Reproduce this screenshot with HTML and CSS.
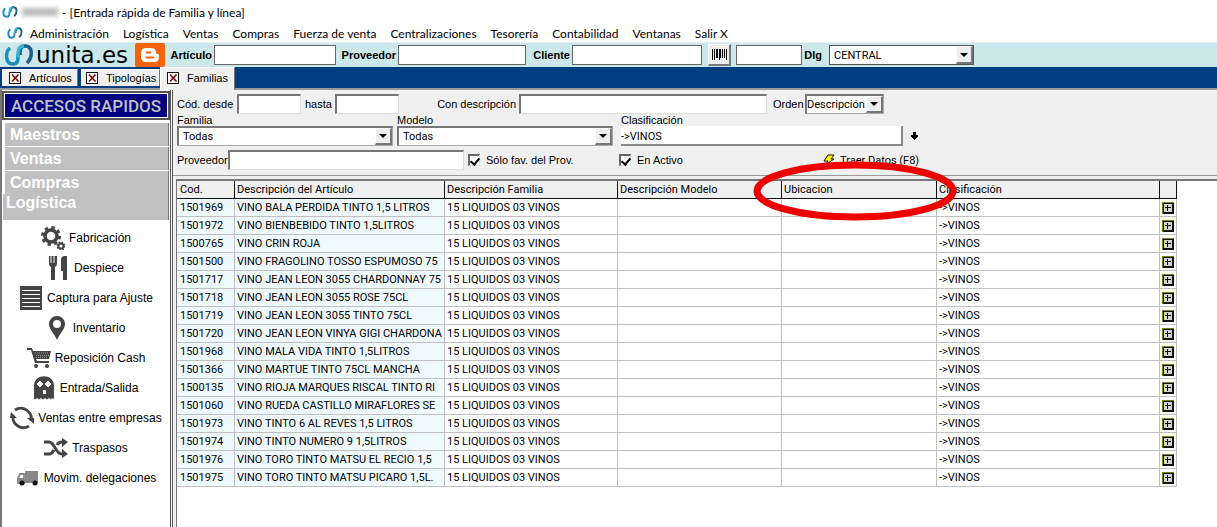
FILE: index.html
```html
<!DOCTYPE html>
<html lang="es">
<head>
  <meta charset="UTF-8">
  <meta name="viewport" content="width=device-width, initial-scale=1">
  <title>Entrada rápida de Familia y línea</title>
  <link rel="stylesheet" href="styles.css">
</head>
<body>
  <!-- Shared icons -->
  <svg class="defs" width="0" height="0" aria-hidden="true">
    <symbol id="logo" viewBox="0 0 30 24">
      <path d="M6 5C1 9 1 21 9 21c6 0 5-7 5-10" fill="none" stroke="#1b8fb8" stroke-width="3.500"/>
      <path d="M16 12c0-4 0-9 5-9 8 0 8 11 2 17" fill="none" stroke="#1f5f85" stroke-width="3.500"/>
      <path d="M14 14c0-5 0-11 6-11" fill="none" stroke="#35b4d6" stroke-width="3.500"/>
    </symbol>
    <symbol id="close" viewBox="0 0 12 12">
      <path d="M0 0h12v12H0z" fill="#111"/><path d="M1 1h10v10H1z" fill="#fff"/>
      <path d="M3 2.500l6.500 7M9.500 2.500l-6.500 7" stroke="#800000" stroke-width="1.600"/>
    </symbol>
    <symbol id="down" viewBox="0 0 8 4"><path d="M0 0h8L4 4z"/></symbol>
    <symbol id="plus" viewBox="0 0 12 12" shape-rendering="crispEdges">
      <path d="M0 0h12v12H0z" fill="#111"/><path d="M0 0h12v1H1v11H0z" fill="#808000"/>
      <path d="M2 2h8v8H2z" fill="#d4d4d4"/><path d="M3 5h6v1H3zM5 3h1v6H5z" fill="#000"/>
    </symbol>
  </svg>

  <header>
    <div class="titlebar">
      <svg class="mini-logo"><use href="#logo"/></svg>
      <span class="smudge"></span>
      <span>- [Entrada rápida de Familia y línea]</span>
    </div>
    <nav class="menu">
      <svg class="mini-logo"><use href="#logo"/></svg>
      <a href="#">Administración</a>
      <a href="#">Logística</a>
      <a href="#">Ventas</a>
      <a href="#">Compras</a>
      <a href="#">Fuerza de venta</a>
      <a href="#">Centralizaciones</a>
      <a href="#">Tesorería</a>
      <a href="#">Contabilidad</a>
      <a href="#">Ventanas</a>
      <a href="#">Salir X</a>
    </nav>
    <div class="toolbar">
      <a class="brand" href="#"><svg><use href="#logo"/></svg><span>unita.es</span></a>
      <button class="blog" aria-label="Blog">
        <svg viewBox="0 0 30 24">
          <rect width="30" height="24" rx="2" fill="#f4640c"/>
          <path d="M11 5h5q5 0 5 4.500q0 1.500 1.500 1.500q1.500 0 1.500 2v1q0 5-5 5h-8q-5 0-5-5v-4q0-5 5-5z" fill="#fff"/>
          <path d="M11.500 9.500h4M11.500 14.500h7" stroke="#f4640c" stroke-width="2" stroke-linecap="round"/>
        </svg>
      </button>
      <label for="articulo">Artículo</label>
      <input type="text" id="articulo">
      <label for="proveedorTop">Proveedor</label>
      <input type="text" id="proveedorTop">
      <label for="cliente">Cliente</label>
      <input type="text" id="cliente">
      <button class="barcode" aria-label="Código de barras">
        <svg viewBox="0 0 16 11" shape-rendering="crispEdges"><path d="M0 0h1v11H0zM2 0h1v11H2zM4 0h2v9H4zM7 0h1v11H7zM9 0h1v9H9zM11 0h1v9h-1zM13 0h1v9h-1zM15 0h1v11h-1z"/></svg>
      </button>
      <input type="text" aria-label="Código">
      <label for="dlg">Dlg</label>
      <div class="combo flat">
        <select id="dlg"><option>CENTRAL</option></select>
        <span class="arrow"><svg><use href="#down"/></svg></span>
      </div>
    </div>
    <div class="tabs">
      <button class="tab"><svg><use href="#close"/></svg>Artículos</button>
      <button class="tab"><svg><use href="#close"/></svg>Tipologías</button>
      <button class="tab active"><svg><use href="#close"/></svg>Familias</button>
    </div>
  </header>

  <div class="workspace">
    <aside class="sidebar">
      <h2>ACCESOS RAPIDOS</h2>
      <button class="group">Maestros</button>
      <button class="group">Ventas</button>
      <button class="group">Compras</button>
      <button class="group open">Logística</button>
      <nav class="shortcuts">
        <a href="#">
          <svg viewBox="0 0 24 24">
            <circle cx="10" cy="10" r="6" fill="none" stroke="#444" stroke-width="3.500"/>
            <circle cx="10" cy="10" r="8.500" fill="none" stroke="#444" stroke-width="3" stroke-dasharray="3.340 3.340"/>
            <circle cx="20" cy="20" r="2.500" fill="none" stroke="#444" stroke-width="2"/>
            <circle cx="20" cy="20" r="3.800" fill="none" stroke="#444" stroke-width="1.500" stroke-dasharray="1.500 1.500"/>
          </svg>Fabricación</a>
        <a href="#">
          <svg class="narrow" viewBox="0 0 20 24"><path d="M1 0h1.500v7h1V0h2v7h1V0H9v8q0 2-2 3v13H3V11q-2-1-2-3zM19 0v24h-4v-9h-2V4q0-4 4-4z" fill="#444"/></svg>Despiece</a>
        <a href="#">
          <svg viewBox="0 0 24 24"><path d="M1 0h22v24H1z" fill="#444"/><path d="M3 4.500h18M3 8.500h18M3 12.500h18M3 16.500h18M3 20.500h18" stroke="#fff"/></svg>Captura para Ajuste</a>
        <a href="#">
          <svg class="narrow" viewBox="0 0 20 24"><path d="M10 0a8 8 0 0 1 8 8c0 5-5 9-8 16c-3-7-8-11-8-16a8 8 0 0 1 8-8zM10 4a4 4 0 1 0 0 8a4 4 0 1 0 0-8z" fill="#444"/></svg>Inventario</a>
        <a href="#">
          <svg viewBox="0 0 24 24">
            <path d="M0 2h5l1 3h18l-2 8H9l1 2h12v2H8L4 4H0z" fill="#444"/>
            <path d="M8 7h14M9 9.500h13M9 11.500h12" stroke="#999" stroke-dasharray="1 1"/>
            <circle cx="9" cy="20" r="2" fill="#444"/><circle cx="20" cy="20" r="2" fill="#444"/>
          </svg>Reposición Cash</a>
        <a href="#">
          <svg class="narrow" viewBox="0 0 20 24">
            <path d="M0 23V10C0-3 20-3 20 10v13l-2-1-1 1.500-2-1.500-2 1.500-2-1.500-2 1.500-2-1.500-2 1.500-2-1.500-2 1.500z" fill="#444"/>
            <path d="M4 6h4v4H4zM12 6h4v4h-4zM9 14h3v4H9z" fill="#fff"/><path d="M6 5v6M14 5v6M3 8h6M11 8h6" stroke="#fff" stroke-width="2"/>
          </svg>Entrada/Salida</a>
        <a href="#">
          <svg viewBox="0 0 24 24"><path d="M5 4a10.500 10.500 0 0 1 16 11M19 20a10.500 10.500 0 0 1-16-10" fill="none" stroke="#444" stroke-width="2.800"/><path d="M17 12h7v6zM0 12h7L1 6z" fill="#444"/></svg>Ventas entre empresas</a>
        <a href="#">
          <svg viewBox="0 0 24 24"><path d="M0 6h5c6 0 6 12 13 12h2M0 18h5c2 0 4-2 5-4M13 9c1-2 3-3 5-3h2" fill="none" stroke="#444" stroke-width="3"/><path d="M18 2l6 4-6 5zM18 13l6 5-6 4z" fill="#444"/></svg>Traspasos</a>
        <a href="#">
          <svg viewBox="0 0 24 24"><path d="M9 5h13v12H9z" fill="#888"/><path d="M8 7v10H2v-5l2-4h4M8 16h14" fill="none" stroke="#888" stroke-width="1.800"/><path d="M2 12h6v5H2z" fill="#888"/><circle cx="6" cy="17" r="2.500" fill="#111"/><circle cx="19" cy="17" r="2.500" fill="#111"/></svg>Movim. delegaciones</a>
      </nav>
    </aside>

    <main>
      <form class="filters">
        <div class="row search">
          <label for="desde">Cód. desde</label>
          <input type="text" id="desde">
          <label for="hasta">hasta</label>
          <input type="text" id="hasta">
          <label class="desc-label" for="descripcion">Con descripción</label>
          <input type="text" id="descripcion">
          <label for="orden">Orden</label>
          <div class="combo">
            <select id="orden"><option>Descripción</option></select>
            <span class="arrow"><svg><use href="#down"/></svg></span>
          </div>
        </div>
        <div class="row selectors">
          <div class="field">
            <label for="familia">Familia</label>
            <div class="combo wide">
              <select id="familia"><option>Todas</option></select>
              <span class="arrow"><svg><use href="#down"/></svg></span>
            </div>
          </div>
          <div class="field">
            <label for="modelo">Modelo</label>
            <div class="combo wide">
              <select id="modelo"><option>Todas</option></select>
              <span class="arrow"><svg><use href="#down"/></svg></span>
            </div>
          </div>
          <div class="field clasif">
            <label for="clasificacion">Clasificación</label>
            <input type="text" id="clasificacion" value="-&gt;VINOS">
          </div>
          <button type="button" class="pick" aria-label="Elegir clasificación"><svg viewBox="0 0 7 8" shape-rendering="crispEdges"><path d="M2 0h3v3h2v2H6v1H5v1H4v1H3V7H2V6H1V5H0V3h2z"/></svg></button>
        </div>
        <div class="row options">
          <label for="proveedor">Proveedor</label>
          <input type="text" id="proveedor">
          <label class="check"><input type="checkbox" checked>Sólo fav. del Prov.</label>
          <label class="check"><input type="checkbox" checked>En Activo</label>
          <button type="button" class="fetch"><svg viewBox="0 0 12 12"><path d="M5 1h6L8 5h3L2 11l3-4H1z" fill="#ff0" stroke="#111"/></svg>Traer Datos (F8)</button>
        </div>
      </form>

      <div class="grid">
        <table>
          <colgroup>
            <col class="c-cod"><col class="c-art"><col class="c-fam"><col class="c-mod"><col class="c-ubi"><col class="c-cla"><col class="c-plus">
          </colgroup>
          <thead>
            <tr>
              <th>Cod.</th>
              <th>Descripción del Artículo</th>
              <th>Descripción Familia</th>
              <th>Descripción Modelo</th>
              <th class="marked">Ubicacion
                <svg class="mark" viewBox="0 0 204 60"><ellipse cx="102" cy="30" rx="98" ry="26" fill="none" stroke="#ee0000" stroke-width="7"/></svg>
              </th>
              <th>Clasificación</th>
              <th></th>
            </tr>
          </thead>
          <tbody>
            <tr><td>1501969</td><td>VINO BALA PERDIDA TINTO 1,5 LITROS</td><td>15 LIQUIDOS 03 VINOS</td><td></td><td></td><td>-&gt;VINOS</td><td><button aria-label="Ver 1501969"><svg><use href="#plus"/></svg></button></td></tr>
            <tr><td>1501972</td><td>VINO BIENBEBIDO TINTO 1,5LITROS</td><td>15 LIQUIDOS 03 VINOS</td><td></td><td></td><td>-&gt;VINOS</td><td><button aria-label="Ver 1501972"><svg><use href="#plus"/></svg></button></td></tr>
            <tr><td>1500765</td><td>VINO CRIN ROJA</td><td>15 LIQUIDOS 03 VINOS</td><td></td><td></td><td>-&gt;VINOS</td><td><button aria-label="Ver 1500765"><svg><use href="#plus"/></svg></button></td></tr>
            <tr><td>1501500</td><td>VINO FRAGOLINO TOSSO ESPUMOSO 75</td><td>15 LIQUIDOS 03 VINOS</td><td></td><td></td><td>-&gt;VINOS</td><td><button aria-label="Ver 1501500"><svg><use href="#plus"/></svg></button></td></tr>
            <tr><td>1501717</td><td>VINO JEAN LEON 3055 CHARDONNAY 75</td><td>15 LIQUIDOS 03 VINOS</td><td></td><td></td><td>-&gt;VINOS</td><td><button aria-label="Ver 1501717"><svg><use href="#plus"/></svg></button></td></tr>
            <tr><td>1501718</td><td>VINO JEAN LEON 3055 ROSE 75CL</td><td>15 LIQUIDOS 03 VINOS</td><td></td><td></td><td>-&gt;VINOS</td><td><button aria-label="Ver 1501718"><svg><use href="#plus"/></svg></button></td></tr>
            <tr><td>1501719</td><td>VINO JEAN LEON 3055 TINTO 75CL</td><td>15 LIQUIDOS 03 VINOS</td><td></td><td></td><td>-&gt;VINOS</td><td><button aria-label="Ver 1501719"><svg><use href="#plus"/></svg></button></td></tr>
            <tr><td>1501720</td><td>VINO JEAN LEON VINYA GIGI CHARDONA</td><td>15 LIQUIDOS 03 VINOS</td><td></td><td></td><td>-&gt;VINOS</td><td><button aria-label="Ver 1501720"><svg><use href="#plus"/></svg></button></td></tr>
            <tr><td>1501968</td><td>VINO MALA VIDA TINTO 1,5LITROS</td><td>15 LIQUIDOS 03 VINOS</td><td></td><td></td><td>-&gt;VINOS</td><td><button aria-label="Ver 1501968"><svg><use href="#plus"/></svg></button></td></tr>
            <tr><td>1501366</td><td>VINO MARTUE TINTO 75CL MANCHA</td><td>15 LIQUIDOS 03 VINOS</td><td></td><td></td><td>-&gt;VINOS</td><td><button aria-label="Ver 1501366"><svg><use href="#plus"/></svg></button></td></tr>
            <tr><td>1500135</td><td>VINO RIOJA MARQUES RISCAL TINTO RI</td><td>15 LIQUIDOS 03 VINOS</td><td></td><td></td><td>-&gt;VINOS</td><td><button aria-label="Ver 1500135"><svg><use href="#plus"/></svg></button></td></tr>
            <tr><td>1501060</td><td>VINO RUEDA CASTILLO MIRAFLORES SE</td><td>15 LIQUIDOS 03 VINOS</td><td></td><td></td><td>-&gt;VINOS</td><td><button aria-label="Ver 1501060"><svg><use href="#plus"/></svg></button></td></tr>
            <tr><td>1501973</td><td>VINO TINTO 6 AL REVES 1,5 LITROS</td><td>15 LIQUIDOS 03 VINOS</td><td></td><td></td><td>-&gt;VINOS</td><td><button aria-label="Ver 1501973"><svg><use href="#plus"/></svg></button></td></tr>
            <tr><td>1501974</td><td>VINO TINTO NUMERO 9 1,5LITROS</td><td>15 LIQUIDOS 03 VINOS</td><td></td><td></td><td>-&gt;VINOS</td><td><button aria-label="Ver 1501974"><svg><use href="#plus"/></svg></button></td></tr>
            <tr><td>1501976</td><td>VINO TORO TINTO MATSU EL RECIO 1,5</td><td>15 LIQUIDOS 03 VINOS</td><td></td><td></td><td>-&gt;VINOS</td><td><button aria-label="Ver 1501976"><svg><use href="#plus"/></svg></button></td></tr>
            <tr><td>1501975</td><td>VINO TORO TINTO MATSU PICARO 1,5L.</td><td>15 LIQUIDOS 03 VINOS</td><td></td><td></td><td>-&gt;VINOS</td><td><button aria-label="Ver 1501975"><svg><use href="#plus"/></svg></button></td></tr>
          </tbody>
        </table>
      </div>
    </main>
  </div>
</body>
</html>
```
FILE: styles.css
```css
* {
  box-sizing: border-box;
}
body {
  margin: 0;
  min-height: 100vh;
  display: flex;
  flex-direction: column;
  font-family: "Liberation Sans", Arial, sans-serif;
  font-size: 11px;
  color: #000;
  background: #fff;
}
a {
  color: inherit;
  text-decoration: none;
}
button, input, select {
  font: inherit;
  color: inherit;
  margin: 0;
  padding: 0;
  border: 0;
  border-radius: 0;
  background: none;
  min-width: 0;
}
svg {
  display: block;
  flex: none;
}
.defs {
  position: absolute;
}

/* Title and menu */
.titlebar, .menu {
  display: flex;
  align-items: center;
  font-family: Lato, "Segoe UI", sans-serif;
  font-size: 12px;
  white-space: nowrap;
}
.titlebar {
  height: 24px;
  padding-left: 2px;
  gap: 4px;
}
.mini-logo {
  width: 16px;
  height: 14px;
}
.smudge {
  width: 36px;
  height: 8px;
  background: #bbb;
  filter: blur(2px);
}
.menu {
  height: 18px;
  padding-left: 7px;
  gap: 14px;
}
.menu .mini-logo {
  margin-right: -7px;
}

/* Toolbar */
.toolbar {
  display: grid;
  grid-template-columns: 131px 35px 44px 122px 62px 128px 46px 130px 34px 66px 27px 145px;
  align-items: center;
  height: 25px;
  padding-left: 4px;
  background: #cde8ea;
  border-top: 1px solid #e6eeee;
}
.toolbar label {
  font-weight: bold;
  text-align: right;
  padding-right: 2px;
}
.toolbar label[for="dlg"] {
  padding-right: 7px;
}
.toolbar > input {
  height: 20px;
  background: #fff;
  border: 1px solid #666;
}
.brand {
  display: flex;
  align-items: center;
  gap: 2px;
  font-family: "DejaVu Sans", sans-serif;
  font-size: 23px;
  line-height: 24px;
}
.brand svg {
  width: 30px;
  height: 24px;
}
.blog svg {
  width: 30px;
  height: 24px;
}
.barcode {
  justify-self: center;
  width: 23px;
  height: 22px;
  padding: 3px;
  background: #eee;
  border: 1px solid #fff;
  border-right: 2px solid #777;
  border-bottom: 2px solid #777;
}
.barcode svg {
  width: 15px;
  height: 11px;
}

/* Drop-downs */
.combo {
  display: grid;
  grid-template-columns: 1fr 17px;
  height: 20px;
  background: #fff;
  border: 1px solid #aaa;
  border-top: 2px solid #777;
  border-left: 2px solid #777;
}
.combo.flat {
  border: 1px solid #555;
}
.combo select {
  appearance: none;
  grid-column: 1 / 3;
  grid-row: 1;
  font-family: Roboto, "Liberation Sans", sans-serif;
}
.combo .arrow {
  grid-column: 2;
  grid-row: 1;
  display: grid;
  place-items: center;
  background: #eee;
  border: 1px solid #fff;
  border-right: 2px solid #777;
  border-bottom: 2px solid #777;
  pointer-events: none;
}
.combo .arrow svg {
  width: 8px;
  height: 4px;
}
.combo.wide select, .combo.flat select {
  padding-left: 4px;
}

/* Tabs */
.tabs {
  display: flex;
  align-items: flex-start;
  height: 23px;
  padding: 2px 0 0 2px;
  gap: 3px;
  background: #003e80;
  border-bottom: 2px solid #999;
}
.tab {
  display: flex;
  align-items: center;
  gap: 8px;
  width: 76px;
  height: 17px;
  padding-left: 6px;
  background: #f0f0f0;
  border-top: 1px solid #fff;
  border-left: 1px solid #fff;
  border-right: 1px solid #777;
  white-space: nowrap;
}
.tab:nth-child(2) {
  width: 79px;
  padding-left: 4px;
}
.tab svg {
  width: 12px;
  height: 12px;
}
.tab.active {
  width: 75px;
  height: 23px;
  margin-top: -2px;
  margin-left: -3px;
  padding-bottom: 2px;
}

/* Sidebar */
.workspace {
  flex: 1;
  display: flex;
}
.sidebar {
  width: 173px;
  flex: none;
  padding: 2px 1px 0 1px;
  border-left: 2px solid #777;
  border-right: 3px double #555;
  background: #fff;
}
.sidebar h2 {
  margin: 0 0 4px;
  height: 27px;
  border: 1px solid #555;
  outline: 1px solid #555;
  box-shadow: inset 0 0 0 1px #fff;
  background: #000080;
  color: #c0c0c0;
  font-family: Roboto, "Liberation Sans", sans-serif;
  font-size: 17px;
  font-weight: 500;
  line-height: 26px;
  text-align: center;
  white-space: nowrap;
}
.group {
  display: block;
  width: calc(100% - 2px);
  height: 23px;
  margin: 0 0 1px 2px;
  padding-left: 5px;
  background: #c0c0c0;
  border-right: 1px solid #777;
  color: #fff;
  font-size: 16px;
  font-weight: bold;
  text-align: left;
}
.group.open {
  width: 100%;
  height: 26px;
  margin: -1px 0 0;
  padding: 0 0 8px 3px;
}
.shortcuts {
  padding-top: 3px;
  font-size: 12px;
}
.shortcuts a {
  display: flex;
  align-items: center;
  justify-content: center;
  gap: 4px;
  height: 30px;
  white-space: nowrap;
}
.shortcuts svg {
  width: 24px;
  height: 24px;
}
.shortcuts .narrow {
  width: 20px;
  margin-right: 2px;
}

/* Filters */
main {
  flex: 1;
  min-width: 0;
  display: flex;
  flex-direction: column;
  background: #f0f0f0;
}
.filters {
  height: 86px;
  padding: 4px 0 0 4px;
  border-bottom: 1px solid #999;
}
.row {
  display: flex;
  align-items: center;
  white-space: nowrap;
}
.filters input[type="text"] {
  height: 20px;
  background: #fff;
  border: 1px solid #ddd;
  border-top: 2px solid #777;
  border-left: 2px solid #777;
}
.search {
  display: grid;
  grid-template-columns: 60px 64px 34px 64px 120px 248px 38px 79px;
}
.search label[for="hasta"] {
  padding-left: 4px;
}
.search .desc-label {
  text-align: right;
  padding-right: 3px;
}
.search label[for="orden"] {
  padding-left: 6px;
}
.selectors {
  align-items: flex-end;
  gap: 4px;
}
.field {
  display: flex;
  flex-direction: column;
  width: 216px;
}
.field label {
  line-height: 12px;
}
.field.clasif {
  width: 282px;
  margin-left: 4px;
}
.filters .clasif input {
  padding-top: 2px;
  font-family: Roboto, "Liberation Sans", sans-serif;
  border: 0;
  border-right: 2px solid #888;
  border-bottom: 2px solid #888;
}
.pick {
  height: 20px;
  padding: 0 4px;
}
.pick svg {
  width: 7px;
  height: 8px;
}
.options {
  display: grid;
  grid-template-columns: 51px 236px 151px 204px 100px;
  margin-top: 4px;
}
.check {
  display: flex;
  align-items: center;
  gap: 6px;
  padding-left: 4px;
}
.check input {
  appearance: none;
  display: grid;
  place-items: center;
  width: 12px;
  height: 12px;
  background: #fff;
  border: 1px solid #ddd;
  border-top: 2px solid #666;
  border-left: 2px solid #666;
}
.check input:checked::before {
  content: "";
  width: 4px;
  height: 7px;
  border: solid #000;
  border-width: 0 2px 2px 0;
  transform: rotate(40deg);
}
.fetch {
  display: flex;
  align-items: center;
  gap: 5px;
  padding-left: 4px;
  font-family: Roboto, "Liberation Sans", sans-serif;
}
.fetch svg {
  width: 12px;
  height: 12px;
}

/* Results */
.grid {
  flex: 1;
  margin: 3px 0 0 3px;
  background: #fff;
  border-top: 2px solid #777;
  border-left: 1px solid #777;
}
table {
  width: 1000px;
  table-layout: fixed;
  border-collapse: separate;
  border-spacing: 0;
  font-family: Roboto, "Liberation Sans", sans-serif;
}
.c-cod { width: 58px; }
.c-art { width: 210px; }
.c-fam { width: 173px; }
.c-mod { width: 164px; }
.c-ubi { width: 155px; }
.c-cla { width: 223px; }
.c-plus { width: 17px; }
th, td {
  height: 18px;
  padding: 0 0 0 2px;
  line-height: 16px;
  text-align: left;
  font-weight: normal;
  white-space: nowrap;
}
th:first-child, td:first-child {
  padding-left: 3px;
}
th {
  background: #f0f0f0;
  border-right: 1px solid #111;
  border-bottom: 1px solid #111;
}
td {
  overflow: hidden;
  border-right: 1px solid #c0c0c0;
  border-bottom: 1px solid #c0c0c0;
}
td:nth-child(-n+2) {
  background: #effaff;
}
td button, td svg {
  display: block;
  width: 12px;
  height: 12px;
}
/* Red ring around the location column */
.marked {
  position: relative;
}
.mark {
  position: absolute;
  left: -29px;
  top: -20px;
  width: 204px;
  height: 60px;
  z-index: 2;
  pointer-events: none;
}
```
